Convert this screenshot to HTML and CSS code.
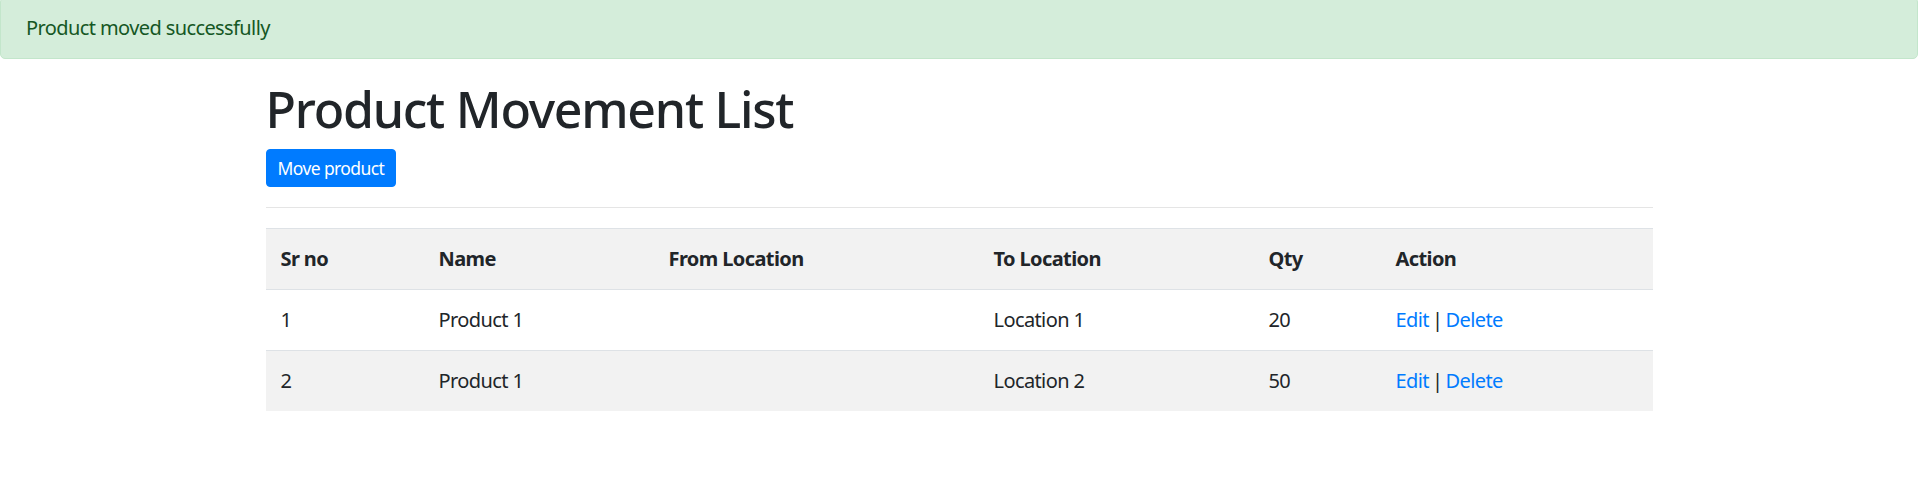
FILE: index.html
```html
<!DOCTYPE html>
<html lang="en">
<head>
<meta charset="utf-8">
<title>Product Movement List</title>
<link rel="stylesheet" href="styles.css">
</head>
<body>
<div class="alert">Product moved successfully</div>
<div class="container">
  <h1 class="title">Product Movement List</h1>
  <div class="actions"><a class="btn" href="#">Move product</a></div>
  <hr class="divider">
  <table class="grid">
    <colgroup>
      <col class="c1"><col class="c2"><col class="c3"><col class="c4"><col class="c5"><col class="c6">
    </colgroup>
    <tbody>
      <tr class="head">
        <th>Sr no</th><th>Name</th><th>From Location</th><th>To Location</th><th>Qty</th><th>Action</th>
      </tr>
      <tr>
        <td>1</td><td>Product 1</td><td></td><td>Location 1</td><td>20</td>
        <td class="ops"><a href="#">Edit</a> | <a href="#">Delete</a></td>
      </tr>
      <tr>
        <td>2</td><td>Product 1</td><td></td><td>Location 2</td><td>50</td>
        <td class="ops"><a href="#">Edit</a> | <a href="#">Delete</a></td>
      </tr>
    </tbody>
  </table>
</div>
</body>
</html>
```
FILE: styles.css
```css
* { box-sizing: border-box; }
body {
  margin: 0;
  font-family: "Noto Sans", "Open Sans", sans-serif;
  font-size: 20px;
  line-height: 1.5;
  letter-spacing: -0.03em;
  color: #212529;
  background: #fff;
}
.alert {
  margin-top: -3px;
  margin-bottom: 20px;
  padding: 15px 25px;
  background: #d4edda;
  border: 1px solid #c3e6cb;
  border-radius: 5px;
  color: #155724;
}
.container {
  width: 1387px;
  margin: 0 auto;
}
.title {
  margin: 0 0 10px;
  font-size: 50px;
  font-weight: 500;
  line-height: 60px;
  letter-spacing: -0.025em;
}
.actions { display: flex; }
.btn {
  display: inline-block;
  height: 38px;
  padding: 5px 11px;
  font-size: 17.5px;
  line-height: 26px;
  color: #fff;
  background: #007bff;
  border: 1px solid #007bff;
  border-radius: 4px;
  text-decoration: none;
}
.divider {
  margin: 20px 0;
  border: 0;
  border-top: 1px solid rgba(0,0,0,.1);
  height: 0;
}
.grid {
  width: 100%;
  border-collapse: collapse;
  table-layout: fixed;
}
.c1 { width: 158px; }
.c2 { width: 230px; }
.c3 { width: 325px; }
.c4 { width: 275px; }
.c5 { width: 127px; }
.c6 { width: 272px; }
.grid th, .grid td {
  padding: 15px;
  line-height: 30px;
  text-align: left;
  border-top: 1px solid #dee2e6;
  vertical-align: top;
}
.grid th { font-weight: 700; }
.grid tr:nth-child(odd) { background: #f2f2f2; }
.grid a { color: #007bff; text-decoration: none; }
.grid .ops { word-spacing: -1.5px; }
```
